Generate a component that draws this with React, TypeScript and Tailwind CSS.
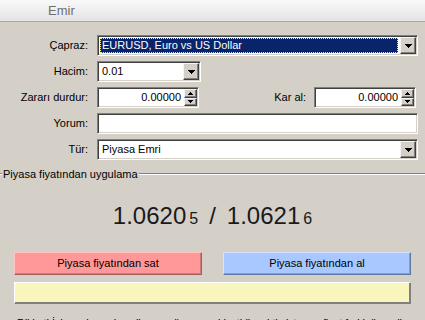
import React from "react";

const sunken =
  "border border-t-[#808080] border-l-[#808080] border-r-white border-b-white shadow-[inset_1px_1px_0_#404040,inset_-1px_-1px_0_#d4d0c8]";
const raised =
  "bg-[#d4d0c8] border border-t-[#f4f4f4] border-l-[#f4f4f4] border-r-[#404040] border-b-[#404040] shadow-[inset_-1px_-1px_0_#808080]";

function DownArrow() {
  return (
    <svg width="7" height="4" viewBox="0 0 7 4" shapeRendering="crispEdges">
      <path d="M0 0h7v1h-1v1h-1v1h-1v1h-1v-1h-1v-1h-1v-1h-1z" fill="#000" />
    </svg>
  );
}

function UpSmall() {
  return (
    <svg width="5" height="3" viewBox="0 0 5 3" shapeRendering="crispEdges">
      <path d="M2 0h1v1h1v1h1v1h-5v-1h1v-1h1z" fill="#000" />
    </svg>
  );
}

function DownSmall() {
  return (
    <svg width="5" height="3" viewBox="0 0 5 3" shapeRendering="crispEdges">
      <path d="M0 0h5v1h-1v1h-1v1h-1v-1h-1v-1h-1z" fill="#000" />
    </svg>
  );
}

function DropButton() {
  return (
    <div className={`w-[16px] h-full flex items-center justify-center ${raised}`}>
      <DownArrow />
    </div>
  );
}

function Select({ width, value, selected }: { width: string; value: string; selected?: boolean }) {
  return (
    <div className={`${width} h-[21px] bg-white ${sunken} p-[1px] flex`}>
      {selected ? (
        <div className="flex-1 m-[1px] mr-[2px] bg-[#0a246a] border border-dotted border-[#f0e68c] text-white flex items-center pl-[1px] leading-none">
          {value}
        </div>
      ) : (
        <div className="flex-1 flex items-center pl-[3px] leading-none">{value}</div>
      )}
      <DropButton />
    </div>
  );
}

function Spin({ value }: { value: string }) {
  return (
    <div className={`w-[102px] h-[21px] bg-white ${sunken} p-[1px] flex`}>
      <div className="flex-1 flex items-center justify-end pr-[3px] leading-none">{value}</div>
      <div className="w-[13px] h-full flex flex-col bg-[#d4d0c8]">
        <div className={`flex-1 flex items-center justify-center ${raised}`}>
          <UpSmall />
        </div>
        <div className={`flex-1 flex items-center justify-center ${raised}`}>
          <DownSmall />
        </div>
      </div>
    </div>
  );
}

function Label({ children }: { children: React.ReactNode }) {
  return <div className="w-[88px] text-right leading-none">{children}</div>;
}

export default function App() {
  return (
    <div className="w-[425px] h-[320px] overflow-hidden bg-[#d4d0c8] font-['Liberation_Sans',Arial,sans-serif] text-[11px] text-black">
      <div className="h-[22px] bg-gradient-to-b from-[#f9f9f9] to-[#e4e4e4] border-b border-[#a8a8a8] flex items-center pl-[48px] text-[13px] text-[#6e6e6e]">
        Emir
      </div>

      <div className="mt-[13px] flex flex-col gap-[5px]">
        <div className="flex items-center gap-[9px]">
          <Label>Çapraz:</Label>
          <Select width="w-[321px]" value="EURUSD, Euro vs US Dollar" selected />
        </div>
        <div className="flex items-center gap-[9px]">
          <Label>Hacim:</Label>
          <Select width="w-[104px]" value="0.01" />
        </div>
        <div className="flex items-center">
          <Label>Zararı durdur:</Label>
          <div className="ml-[9px]">
            <Spin value="0.00000" />
          </div>
          <div className="w-[107px] text-right leading-none">Kar al:</div>
          <div className="ml-[8px]">
            <Spin value="0.00000" />
          </div>
        </div>
        <div className="flex items-center gap-[9px]">
          <Label>Yorum:</Label>
          <div className={`w-[321px] h-[21px] bg-white ${sunken}`} />
        </div>
        <div className="flex items-center gap-[9px]">
          <Label>Tür:</Label>
          <Select width="w-[321px]" value="Piyasa Emri" />
        </div>
      </div>

      <div className="mt-[7px] flex items-center h-[14px]">
        <div className="w-[2px] h-[2px] border-t border-t-[#808080] border-b border-b-white" />
        <div className="px-[1px] leading-none">Piyasa fiyatından uygulama</div>
        <div className="flex-1 h-[2px] border-t border-t-[#808080] border-b border-b-white" />
      </div>

      <div className="mt-[23px] flex justify-center items-baseline leading-none text-[#1a1a1a]">
        <span className="text-[24px]">1.0620</span>
        <span className="text-[16px] ml-[3px]">5</span>
        <span className="text-[24px] mx-[11px]">/</span>
        <span className="text-[24px]">1.0621</span>
        <span className="text-[16px] ml-[3px]">6</span>
      </div>

      <div className="mt-[24px] px-[14px] flex justify-between">
        <div className="w-[188px] h-[23px] bg-[#ff9898] border border-t-[#ffc4c4] border-l-[#ffc4c4] border-r-[#a06060] border-b-[#a06060] shadow-[inset_-1px_-1px_0_#d07878] flex items-center justify-center">
          Piyasa fiyatından sat
        </div>
        <div className="w-[188px] h-[23px] bg-[#a8c8ff] border border-t-[#d4e4ff] border-l-[#d4e4ff] border-r-[#6078a0] border-b-[#6078a0] shadow-[inset_-1px_-1px_0_#88a0c8] flex items-center justify-center">
          Piyasa fiyatından al
        </div>
      </div>

      <div className="mt-[7px] mx-[14px] h-[22px] border border-t-white border-l-white border-r-[#808080] border-b-[#808080] shadow-[inset_-1px_-1px_0_#808080] bg-[#f8f6bc]" />

      <div className="mt-[14px] pl-[17px] whitespace-nowrap leading-none tracking-[-0.2px]">
        Dikkat! İşlem piyasa koşullarına göre gerçekleştirilecektir, istenen fiyat farklı önemli
      </div>
    </div>
  );
}
